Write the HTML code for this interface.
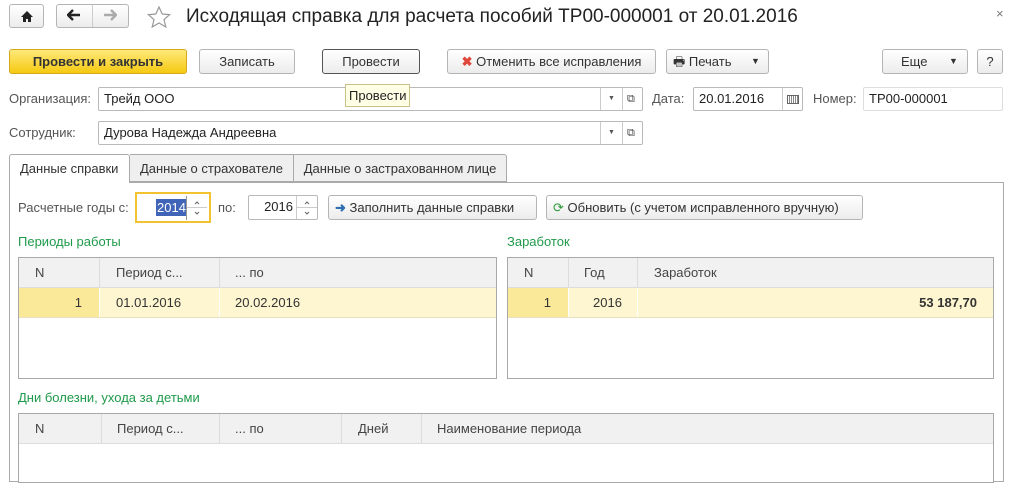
<!DOCTYPE html>
<html><head><meta charset="utf-8"><style>
*{box-sizing:border-box;margin:0;padding:0}
body{width:1014px;height:476px;overflow:hidden;background:#fff;font-family:"Liberation Sans",Arial,sans-serif;font-size:13px;color:#333;position:relative}
.a{position:absolute}
.btn{position:absolute;border:1px solid #b5b5b5;border-radius:3px;background:linear-gradient(#fff,#ececec);text-align:center;line-height:23px;color:#333;height:25px}
.fld{position:absolute;border:1px solid #b9b9b9;border-radius:2px;background:#fff;height:24px;line-height:22px;padding-left:5px;color:#222}
.lbl{position:absolute;color:#555;line-height:24px}
.g{position:absolute;color:#1f9a4a;font-size:13px}
.tb{position:absolute;border:1px solid #a8a8a8;background:#fff}
.hd{position:absolute;left:0;right:0;top:0;height:30px;background:#f1f1f1;border-bottom:1px solid #ddd}
.c{position:absolute;top:0;height:100%;border-left:1px solid #dcdcdc;line-height:30px;color:#444}
</style></head><body>
<div class="btn" style="left:9px;top:4px;width:35px;height:24px"><svg width="14" height="13" style="margin-top:5px" viewBox="0 0 14 13"><path d="M7 1L1 7h2v5h3V9h2v3h3V7h2z" fill="#222"/></svg></div>
<div class="btn" style="left:56px;top:4px;width:73px;height:24px"></div>
<div class="a" style="left:92px;top:5px;width:1px;height:22px;background:#ccc"></div>
<svg class="a" style="left:67px;top:9px" width="14" height="12" viewBox="0 0 14 12"><path d="M1 6h12M6 1L1 6l5 5" stroke="#222" stroke-width="2.4" fill="none"/></svg>
<svg class="a" style="left:103px;top:9px" width="14" height="12" viewBox="0 0 14 12"><path d="M1 6h12M8 1l5 5-5 5" stroke="#aaa" stroke-width="2.4" fill="none"/></svg>
<svg class="a" style="left:147px;top:6px" width="24" height="22" viewBox="0 0 24 22"><path d="M12 1l3.2 7 7.5.6-5.7 5 1.8 7.4L12 17l-6.8 4 1.8-7.4-5.7-5 7.5-.6z" fill="none" stroke="#999" stroke-width="1.2"/></svg>
<div class="a" style="left:186px;top:5px;font-size:19px;color:#222;line-height:24px">Исходящая справка для расчета пособий ТР00-000001 от 20.01.2016</div>
<div class="a" style="left:996px;top:6px;color:#777;font-size:13px">×</div>

<div class="btn" style="left:9px;top:49px;width:178px;background:linear-gradient(#ffe97a,#f5c912);border-color:#d4aa1c;font-weight:bold;color:#333">Провести и закрыть</div>
<div class="btn" style="left:199px;top:49px;width:96px">Записать</div>
<div class="btn" style="left:322px;top:49px;width:98px;border-color:#555">Провести</div>
<div class="btn" style="left:447px;top:49px;width:209px"><span style="color:#e0463a;font-weight:bold">✖</span> Отменить все исправления</div>
<div class="btn" style="left:666px;top:49px;width:103px;text-align:left;padding-left:6px">🖶 Печать<span style="position:absolute;left:84px;font-size:9px">▼</span></div>
<div class="btn" style="left:882px;top:49px;width:86px;text-align:left;padding-left:18px">Еще<span style="position:absolute;left:66px;font-size:9px">▼</span></div>
<div class="btn" style="left:977px;top:49px;width:26px">?</div>

<div class="lbl" style="left:9px;top:87px">Организация:</div>
<div class="fld" style="left:98px;top:87px;width:545px">Трейд ООО</div>
<div class="a" style="left:600px;top:88px;width:1px;height:22px;background:#ccc"></div>
<div class="a" style="left:622px;top:88px;width:1px;height:22px;background:#ccc"></div>
<div class="a" style="left:608px;top:89px;font-size:7px;line-height:20px;color:#555">▼</div>
<div class="a" style="left:627px;top:87px;font-size:11px;line-height:24px;color:#444">⧉</div>
<div class="a" style="left:345px;top:84px;width:65px;height:23px;background:#ffffe6;border:1px solid #c9c08a;line-height:21px;padding-left:3px;color:#222">Провести</div>
<div class="lbl" style="left:652px;top:87px">Дата:</div>
<div class="fld" style="left:693px;top:87px;width:110px">20.01.2016</div>
<div class="a" style="left:782px;top:88px;width:1px;height:22px;background:#ccc"></div>
<div class="a" style="left:787px;top:95px;width:12px;height:9px;border:1px solid #666;background:repeating-linear-gradient(90deg,#fff 0 1px,#888 1px 2px)"></div>
<div class="lbl" style="left:813px;top:87px">Номер:</div>
<div class="fld" style="left:863px;top:87px;width:140px;border-color:#ddd">ТР00-000001</div>

<div class="lbl" style="left:9px;top:121px">Сотрудник:</div>
<div class="fld" style="left:98px;top:121px;width:545px">Дурова Надежда Андреевна</div>
<div class="a" style="left:600px;top:122px;width:1px;height:22px;background:#ccc"></div>
<div class="a" style="left:622px;top:122px;width:1px;height:22px;background:#ccc"></div>
<div class="a" style="left:608px;top:123px;font-size:7px;line-height:20px;color:#555">▼</div>
<div class="a" style="left:627px;top:121px;font-size:11px;line-height:24px;color:#444">⧉</div>

<div class="a" style="left:9px;top:182px;width:995px;height:300px;border:1px solid #aaa"></div>
<div class="a" style="left:9px;top:154px;width:121px;height:29px;border:1px solid #aaa;border-bottom:none;background:#fff;border-radius:3px 3px 0 0;line-height:28px;padding-left:10px;color:#333">Данные справки</div>
<div class="a" style="left:130px;top:154px;width:164px;height:28px;border:1px solid #aaa;border-left:none;background:#efefef;line-height:28px;text-align:center;color:#333">Данные о страхователе</div>
<div class="a" style="left:293px;top:154px;width:214px;height:28px;border:1px solid #aaa;background:#efefef;border-radius:0 3px 0 0;line-height:28px;text-align:center;color:#333">Данные о застрахованном лице</div>

<div class="lbl" style="left:18px;top:196px">Расчетные годы с:</div>
<div class="a" style="left:135px;top:192px;width:76px;height:31px;border:2px solid #f2c230"></div>
<div class="a" style="left:156px;top:199px;background:#3f64b8;color:#fff;line-height:17px;padding:0 1px">2014</div>
<div class="a" style="left:186px;top:196px;width:1px;height:24px;background:#999"></div>
<div class="a" style="left:187px;top:207px;width:20px;height:1px;background:#ccc"></div>
<svg class="a" style="left:194px;top:200px" width="6" height="16" viewBox="0 0 6 16"><path d="M1 4l2-2 2 2M1 12l2 2 2-2" stroke="#666" fill="none"/></svg>
<div class="lbl" style="left:218px;top:196px">по:</div>
<div class="fld" style="left:248px;top:195px;width:70px;height:25px;text-align:right;padding-right:24px">2016</div>
<div class="a" style="left:296px;top:196px;width:1px;height:23px;background:#ccc"></div>
<div class="a" style="left:297px;top:207px;width:20px;height:1px;background:#ccc"></div>
<svg class="a" style="left:304px;top:200px" width="6" height="16" viewBox="0 0 6 16"><path d="M1 4l2-2 2 2M1 12l2 2 2-2" stroke="#666" fill="none"/></svg>
<div class="btn" style="left:328px;top:195px;width:209px;text-align:left;padding-left:6px"><span style="color:#2c6fb4;font-weight:bold">➜</span> Заполнить данные справки</div>
<div class="btn" style="left:546px;top:195px;width:317px;text-align:left;padding-left:6px"><span style="color:#2e9a3c">⟳</span> Обновить (с учетом исправленного вручную)</div>

<div class="g" style="left:18px;top:234px">Периоды работы</div>
<div class="tb" style="left:18px;top:257px;width:479px;height:122px">
 <div class="hd"><div class="c" style="left:0;width:80px;border:none;padding-left:16px">N</div><div class="c" style="left:80px;padding-left:16px">Период с...</div><div class="c" style="left:200px;padding-left:15px">... по</div></div>
 <div class="a" style="left:0;right:0;top:30px;height:30px;background:#fdf6d0;border-bottom:1px solid #e8e0c0;line-height:29px;color:#333">
  <div class="a" style="left:0;width:80px;height:29px;background:#fbe99a;text-align:right;padding-right:17px">1</div>
  <div class="a" style="left:80px;height:29px;border-left:1px solid #fff;padding-left:16px">01.01.2016</div>
  <div class="a" style="left:200px;height:29px;border-left:1px solid #fff;padding-left:15px">20.02.2016</div>
 </div>
</div>
<div class="g" style="left:507px;top:234px">Заработок</div>
<div class="tb" style="left:507px;top:257px;width:487px;height:122px">
 <div class="hd"><div class="c" style="left:0;width:60px;border:none;padding-left:16px">N</div><div class="c" style="left:60px;padding-left:15px">Год</div><div class="c" style="left:129px;padding-left:16px">Заработок</div></div>
 <div class="a" style="left:0;right:0;top:30px;height:30px;background:#fdf6d0;border-bottom:1px solid #e8e0c0;line-height:29px;color:#333">
  <div class="a" style="left:0;width:60px;height:29px;background:#fbe99a;text-align:right;padding-right:17px">1</div>
  <div class="a" style="left:60px;height:29px;border-left:1px solid #fff;padding-left:24px">2016</div>
  <div class="a" style="left:129px;right:0;height:29px;border-left:1px solid #fff;text-align:right;padding-right:16px;font-weight:bold">53 187,70</div>
 </div>
</div>
<div class="g" style="left:18px;top:390px">Дни болезни, ухода за детьми</div>
<div class="tb" style="left:18px;top:413px;width:976px;height:70px">
 <div class="hd"><div class="c" style="left:0;width:82px;border:none;padding-left:16px">N</div><div class="c" style="left:82px;padding-left:15px">Период с...</div><div class="c" style="left:200px;padding-left:15px">... по</div><div class="c" style="left:322px;padding-left:16px">Дней</div><div class="c" style="left:402px;padding-left:15px">Наименование периода</div></div>
</div>
</body></html>
